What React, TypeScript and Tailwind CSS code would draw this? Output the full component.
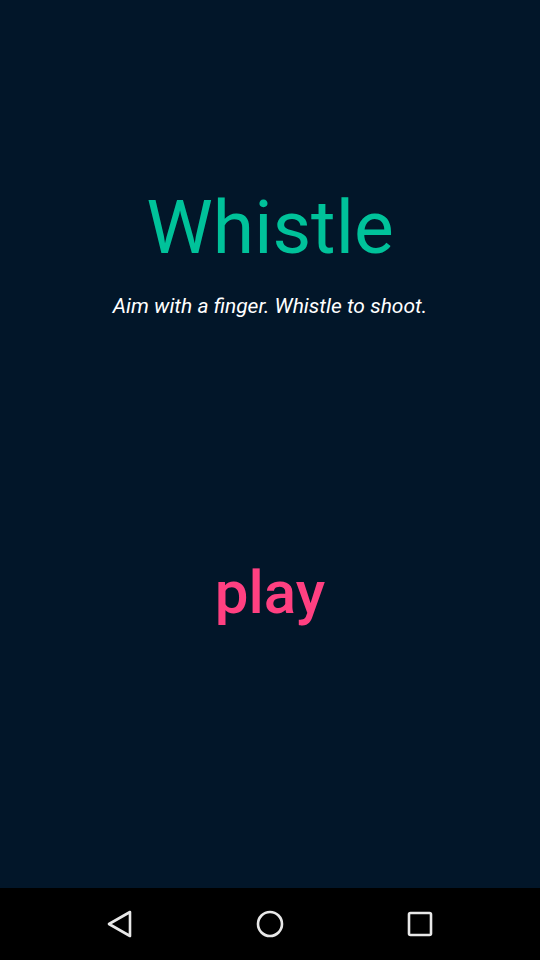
import React from "react";

const NavBar: React.FC = () => (
  <div className="flex h-[72px] items-center justify-center gap-[120px] bg-black">
    <svg width="30" height="30" viewBox="0 0 30 30" fill="none">
      <path d="M25 3 L4 15 L25 27 Z" stroke="#e8e8e8" strokeWidth="2.6" strokeLinejoin="round" />
    </svg>
    <svg width="30" height="30" viewBox="0 0 30 30" fill="none">
      <circle cx="15" cy="15" r="12" stroke="#e8e8e8" strokeWidth="2.6" />
    </svg>
    <svg width="30" height="30" viewBox="0 0 30 30" fill="none">
      <rect x="4" y="4" width="22" height="22" rx="1.5" stroke="#e8e8e8" strokeWidth="2.6" />
    </svg>
  </div>
);

const App: React.FC = () => {
  return (
    <div className="flex h-[960px] w-[540px] flex-col bg-[#021629] font-['Roboto',sans-serif]">
      <div className="flex flex-1 flex-col items-center">
        <h1 className="mt-[182px] text-[75px] font-normal leading-[90px] text-[#00c29a]">
          Whistle
        </h1>
        <p className="mt-[21px] text-[21px] italic leading-[26px] text-white">
          Aim with a finger. Whistle to shoot.
        </p>
        <button className="mt-[239px] text-[60px] font-medium leading-[70px] text-[#ff4081]">
          play
        </button>
      </div>
      <NavBar />
    </div>
  );
};

export default App;
